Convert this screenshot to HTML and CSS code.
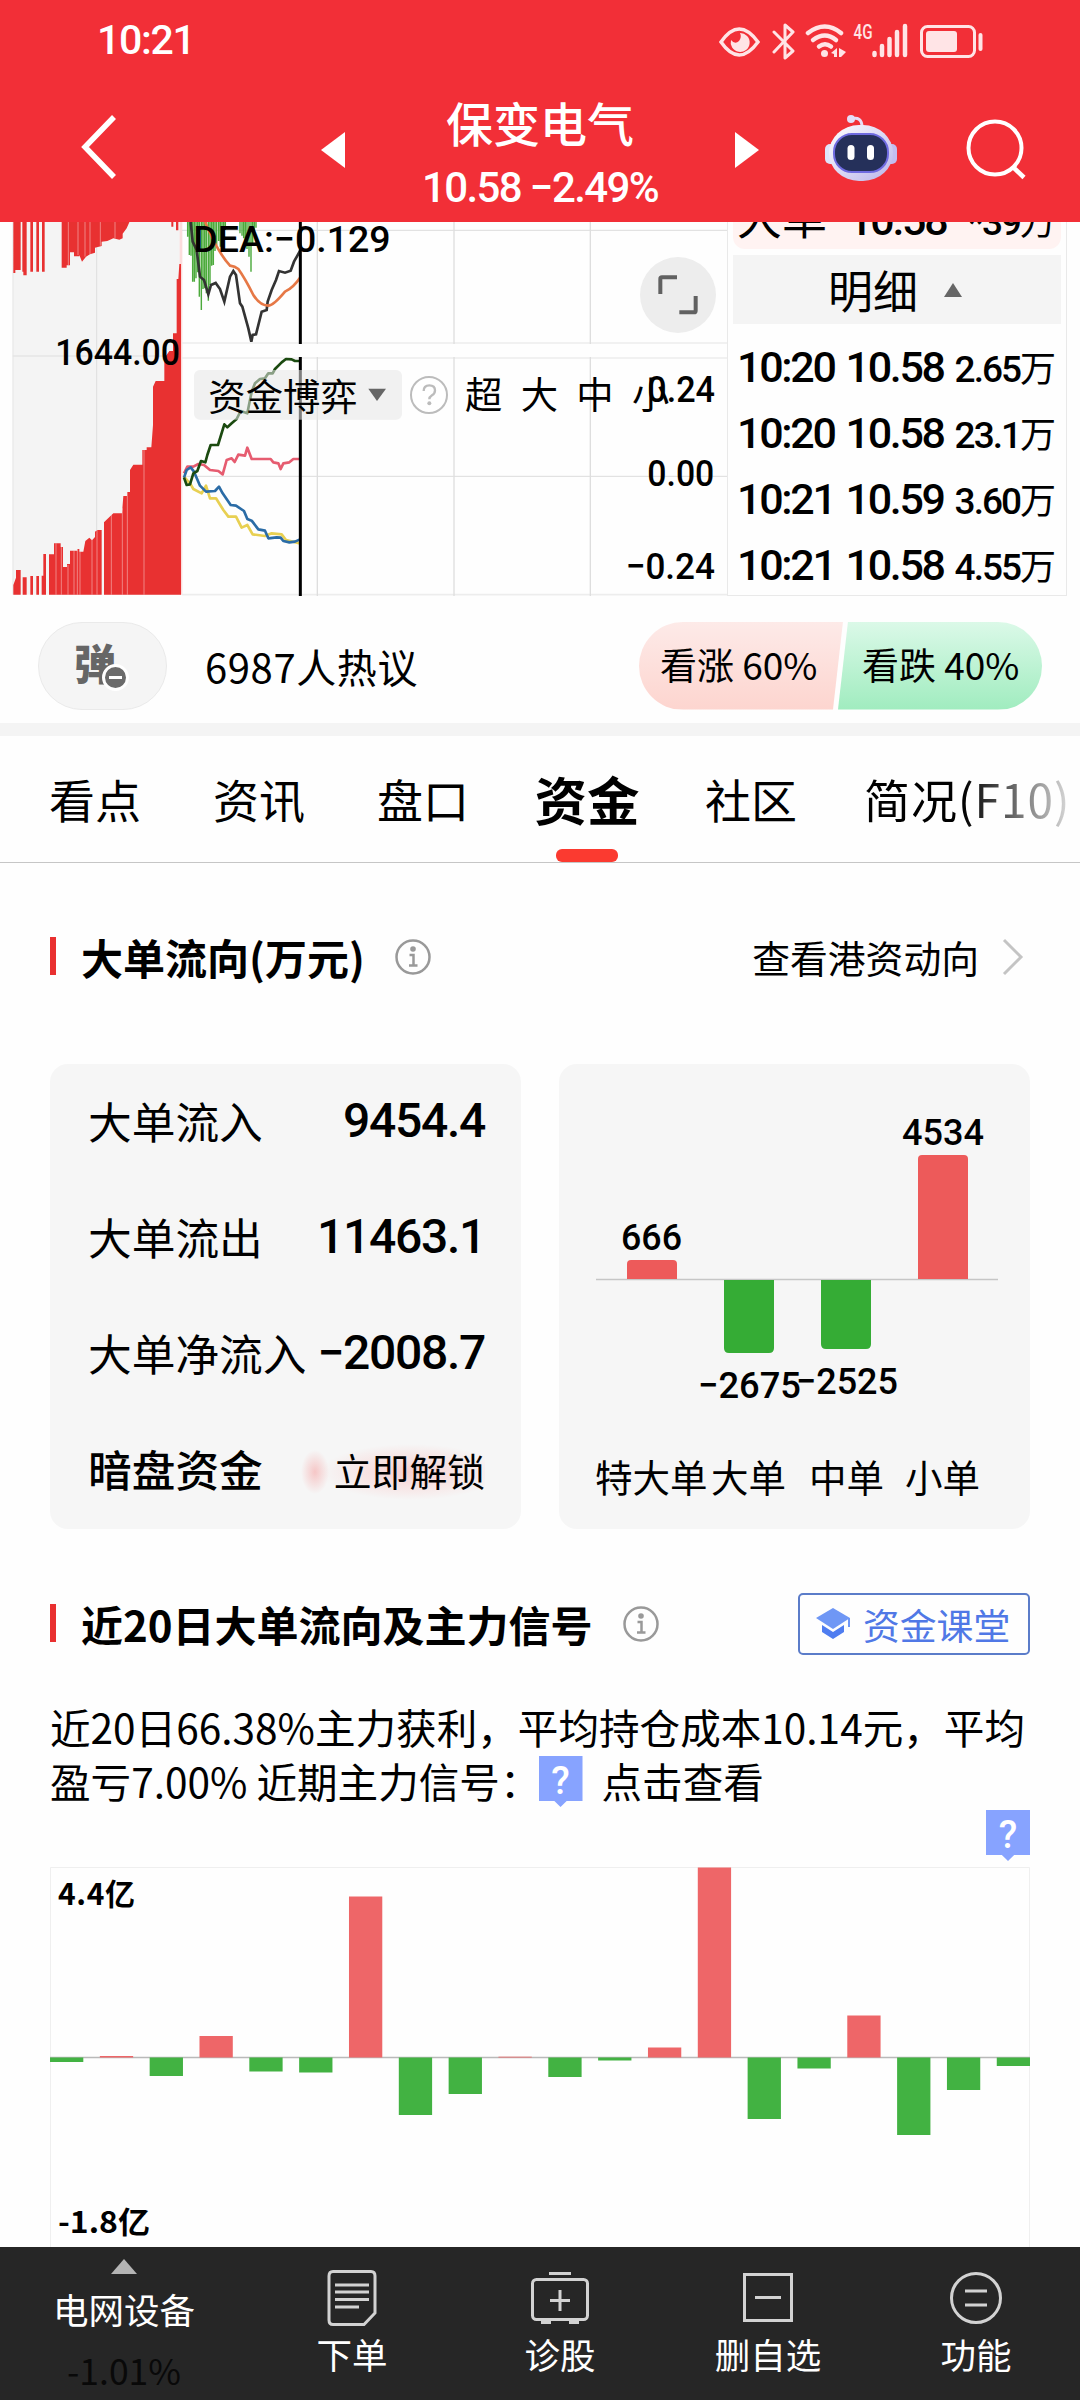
FILE: index.html
```html
<!DOCTYPE html>
<html lang="zh-CN">
<head>
    <meta charset="UTF-8">
    <meta name="viewport" content="width=device-width, initial-scale=1.0">
    <title>保变电气</title>
    <link rel="stylesheet" href="styles.css">
</head>
<body>
    <header>
        <div class="status-bar">
            <span class="clock num">10:21</span>
            <svg class="status-icons" width="270" height="40" viewBox="715 18 270 40">
                <path d="M721 40Q739 14 758 40Q739 66 721 40Z" fill="none" stroke="#ffe4e6" stroke-width="3.5"/>
                <path d="M740 31a9.500 9.500 0 1 1-9 7q4 5 8 1q3-4 1-8z" fill="#ffe4e6"/>
                <path d="M774 30L793 49L785 56V23L793 30L774 50" fill="none" stroke="#ffe4e6" stroke-width="3" stroke-linejoin="round" stroke-linecap="round"/>
                <g fill="none" stroke="#ffe4e6" stroke-width="4.500" stroke-linecap="round">
                    <path d="M808 31Q825 18 841 31"/>
                    <path d="M813 38Q825 29 836 38"/>
                    <path d="M819 44.500Q825 40 831 44.500"/>
                </g>
                <circle cx="824.500" cy="51.500" r="3.500" fill="#ffe4e6"/>
                <path d="M831 51l6-5v9h-3v-3zM839 46l7 4-5 5h-2z" fill="#ffe4e6"/>
                <text class="net" x="853.500" y="37" textLength="19" lengthAdjust="spacingAndGlyphs">4G</text>
                <path d="M874.500 51v2M882 44v9M889.500 37v16M897 30v23M905 24v29" stroke="#ffe4e6" stroke-width="4.500" stroke-linecap="round"/>
                <rect x="921.500" y="24.500" width="53" height="30" rx="6" fill="none" stroke="#ffe4e6" stroke-width="3"/>
                <rect x="926" y="29" width="31" height="21" rx="3" fill="#ffe4e6"/>
                <path d="M980.500 33v14" stroke="#ffe4e6" stroke-width="4" stroke-linecap="round"/>
            </svg>
        </div>
        <div class="title-bar">
            <svg class="back" width="40" height="70" viewBox="0 0 40 70"><path d="M35 5L6 35L35 65" fill="none" stroke="#fff" stroke-width="5.5"/></svg>
            <svg class="prev" width="24" height="36" viewBox="0 0 24 36"><path d="M24 0V36L0 18Z" fill="#fff"/></svg>
            <div class="stock">
                <h1>保变电气</h1>
                <p class="num">10.58 −2.49%</p>
            </div>
            <svg class="next" width="24" height="36" viewBox="0 0 24 36"><path d="M0 0V36L24 18Z" fill="#fff"/></svg>
            <svg class="robot" width="74" height="68" viewBox="0 0 74 68">
                <defs>
                    <linearGradient id="shell" x1="0" y1="0" x2="1" y2="1">
                        <stop offset="0" stop-color="#fff"/>
                        <stop offset="1" stop-color="#b9b4ea"/>
                    </linearGradient>
                </defs>
                <path d="M27 5Q38 2 38 13" fill="none" stroke="#e8dcf5" stroke-width="3"/>
                <circle cx="27" cy="5" r="4" fill="#e4def8"/>
                <rect x="1" y="30" width="12" height="20" rx="5" fill="#dfe4fa"/>
                <rect x="61" y="30" width="12" height="20" rx="5" fill="#c3bdf0"/>
                <rect x="5" y="11" width="64" height="56" rx="30" fill="url(#shell)"/>
                <rect x="10" y="20" width="54" height="38" rx="18" fill="#25305a" stroke="#6f6be0" stroke-width="2"/>
                <rect x="23.500" y="31" width="7" height="15" rx="3.500" fill="#fff"/>
                <rect x="43" y="31" width="7" height="15" rx="3.500" fill="#fff"/>
            </svg>
            <svg class="search" width="64" height="64" viewBox="0 0 64 64">
                <circle cx="31" cy="31" r="26.500" fill="none" stroke="#fff" stroke-width="4"/>
                <path d="M49 50L60 60.500" stroke="#fff" stroke-width="4.500"/>
            </svg>
        </div>
    </header>

    <main>
        <section class="quote">
            <!-- chart grid uses 3 units per pixel -->
            <svg class="charts" width="727" height="374" viewBox="0 21 2181 1122">
                <!-- depth -->
                <rect x="38" y="21" width="505" height="1118" fill="#f4f4f4"/>
                <path d="M290 21V1139M38 423H543" stroke="#dedede" stroke-width="3"/>
                <path d="M39 21V1139" stroke="#e6e6e6" stroke-width="3"/>
                <path d="M543 21V1139" stroke="#fbdcdc" stroke-width="8"/>
                <g fill="#e83131">
                    <path d="M40 21V174H46V165H62V21ZM67 21V170H70V181H80V21ZM91 21V170H99V21ZM109 21V170H117V21ZM126 21V170H134V21ZM185 21V158H200V151H210V112H222V124H238V120L246 140L258 125L270 118L285 113V98L305 93V80L322 78L340 70L358 74L368 70V56L380 40L388 22V21Z"/>
                    <path d="M514 21V35H520V21ZM528 21V46H535V21Z"/>
                    <path d="M40 1139V1110L48 1088V1065H62V1139ZM68 1139V1087H80V1139ZM91 1139V1083H99V1139ZM109 1139V1083H117V1139ZM125 1139V1082H130V1017H138V1139ZM147 1139V1018H162V985H182V996H189V1056H201V1047H210V1007H232V1002H238V1010H250L256 978L268 968L276 976L285 966V950L292 945H305V1139ZM312 1139V922L322 912L340 895H366L370 843H381V831H390V765L400 749H427V705H440V697H454L459 630V515L467 498H493V430L508 408H519V355H530V192H535L538 147H543V1139Z"/>
                </g>
                <path d="M204 1050V1139M222 1007V1139M232 1003V1139M276 975V1139M334 900V1139M367 880V1139M382 831V1139M432 705V1139M168 985V1139M184 996V1139M240 1010V1139M291 945V1139M345 21V70M270 21V118M301 21V92M205 21V150M234 21V120M255 21V125" stroke="#fff" stroke-opacity=".4" stroke-width="3"/>

                <!-- frames -->
                <path d="M546 46H2181M546 784H2181" stroke="#dcdcdc" stroke-width="3"/>
                <path d="M546 384H2181M546 429H2181M546 1139H2181" stroke="#ededed" stroke-width="5"/>
                <path d="M952 21V387M1362 21V387M1771 21V387M952 426V1143M1362 426V1143M1771 426V1143" stroke="#dedede" stroke-width="4"/>

                <!-- MACD -->
                <path d="M563 21V65M568 21V120M573 21V122M578 21V200M583 21V200M588 21V190M593 21V172M598 21V245M604 21V285M609 21V222M614 21V220M619 21V235M625 21V257M630 21V210M635 21V152M640 21V150M645 21V108M650 21V90M656 21V78M661 21V95M666 21V90M671 21V75M676 21V45M720 21V55M726 21V62M731 21V70M736 21V92M741 21V102M747 21V125M753 21V170M758 21V85M763 21V60M768 21V38" stroke="#4caa3c" stroke-width="4.300"/>
                <path d="M572 21L578 80L590 105L600 185L612 195L625 238L633 210L647 204L660 222L673 260L690 185L700 168L708 180L720 265L727 275L745 340L754 380L758 360L768 358L785 290L800 285L803 260L815 225L828 195L837 168L855 173L872 167L882 140L900 108" fill="none" stroke="#333" stroke-width="8"/>
                <path d="M615 21L640 75Q665 125 690 152Q705 154 715 162Q735 190 760 240Q780 272 805 272Q820 272 855 230Q880 218 900 188" fill="none" stroke="#e67846" stroke-width="8"/>

                <!-- fund flow lines -->
                <g fill="none" stroke-width="8" stroke-linejoin="round">
                    <path d="M552 775L562 755H580L595 747L612 750L630 765L655 768L668 778L680 735L695 730L704 741L715 719L735 722L742 698L755 732H812L820 742L835 745L842 762L850 745L868 742L880 732H900" stroke="#e65c70"/>
                    <path d="M552 785L572 808L580 822L605 835L618 812L630 850H648L670 885L685 905H708L725 938L742 930L758 958L795 963L815 955L845 958L858 975L900 985" stroke="#e8d052"/>
                    <path d="M552 788L560 765L572 757L582 770L600 812L618 830L645 828L657 815L668 835L692 870L708 872L732 888L742 912L755 917L775 943L795 947L805 970L830 967L842 968L850 978L868 982L885 980L900 973" stroke="#2b6ca6"/>
                    <path d="M552 788L560 810L570 808L580 775L592 768L603 738L616 742L622 720L632 690L654 690L673 628L682 637L695 625L710 612L722 588L742 595L755 530L765 505L780 492L795 490L805 475H818L825 462L845 442L858 432L875 433L885 438H900" stroke="#1b4a10"/>
                </g>
                <path d="M901 21V387M901 426V1143" stroke="#000" stroke-width="9"/>

                <rect x="582" y="465" width="624" height="149" rx="18" fill="#e6e6e6" fill-opacity=".55"/>
                <path d="M1105 521H1158L1131 558Z" fill="#666"/>
                <circle cx="1287" cy="540" r="54" fill="#fff" stroke="#bcbcbc" stroke-width="6"/>
                <path d="M1271 528Q1271 511 1288 511Q1305 511 1305 526Q1305 536 1296 541Q1288 546 1288 553" fill="none" stroke="#bcbcbc" stroke-width="7"/>
                <circle cx="1288" cy="565" r="6" fill="#bcbcbc"/>

                <text class="chart-num" x="580" y="111" textLength="592" lengthAdjust="spacingAndGlyphs">DEA:−0.129</text>
                <text class="chart-num" x="166" y="450" textLength="374" lengthAdjust="spacingAndGlyphs">1644.00</text>
                <text class="chart-cjk" x="625" y="588">资金博弈</text>
                <text class="chart-cjk" x="1395" y="582">超</text>
                <text class="chart-cjk" x="1562" y="582">大</text>
                <text class="chart-cjk" x="1729" y="582">中</text>
                <text class="chart-cjk" x="1896" y="582">小</text>
                <text class="chart-num" x="1942" y="560" textLength="203" lengthAdjust="spacingAndGlyphs">0.24</text>
                <text class="chart-num" x="1942" y="813" textLength="201" lengthAdjust="spacingAndGlyphs">0.00</text>
                <text class="chart-num" x="1877" y="1091" textLength="268" lengthAdjust="spacingAndGlyphs">−0.24</text>

                <circle cx="2034" cy="240" r="114" fill="#ededed"/>
                <path d="M1981 237V192Q1981 187 1986 187H2031M2087 243V287Q2087 292 2082 292H2038" fill="none" stroke="#616161" stroke-width="12"/>
            </svg>
            <div class="ticks">
                <div class="tick big"><span>大单</span><b class="num">10.58</b><span class="vol"><i class="num">*39</i>万</span></div>
                <div class="ticks-head">明细<svg width="18" height="14" viewBox="0 0 18 14"><path d="M9 0L18 14H0Z" fill="#666"/></svg></div>
                <div class="tick"><b class="num">10:20</b><b class="num">10.58</b><span class="vol"><i class="num">2.65</i>万</span></div>
                <div class="tick"><b class="num">10:20</b><b class="num">10.58</b><span class="vol"><i class="num">23.1</i>万</span></div>
                <div class="tick"><b class="num">10:21</b><b class="num">10.59</b><span class="vol"><i class="num">3.60</i>万</span></div>
                <div class="tick"><b class="num">10:21</b><b class="num">10.58</b><span class="vol"><i class="num">4.55</i>万</span></div>
            </div>
        </section>

        <section class="discuss">
            <button class="danmu">弹<span class="danmu-off"></span></button>
            <p>6987人热议</p>
            <div class="vote">
                <span class="up">看涨 60%</span>
                <span class="down">看跌 40%</span>
            </div>
        </section>

        <nav class="tabs">
            <a>看点</a>
            <a>资讯</a>
            <a>盘口</a>
            <a class="active">资金</a>
            <a>社区</a>
            <a class="last">简况(F10)</a>
        </nav>

        <section class="flow">
            <div class="section-title">
                <h2>大单流向(万元)</h2>
                <svg class="info" width="38" height="38" viewBox="0 0 38 38"><circle cx="19" cy="19" r="16.500"/><circle class="dot" cx="19" cy="11" r="2.800"/><path d="M15.500 17H19.500V27M15 27.500H23.500"/></svg>
                <a class="more">查看港资动向<svg width="22" height="38" viewBox="0 0 22 38"><path d="M2 2L19 19L2 36" fill="none" stroke="#c4c4c4" stroke-width="3"/></svg></a>
            </div>
            <div class="cards">
                <div class="card">
                    <dl>
                        <dt>大单流入</dt><dd class="num">9454.4</dd>
                        <dt>大单流出</dt><dd class="num">11463.1</dd>
                        <dt>大单净流入</dt><dd class="num">−2008.7</dd>
                        <dt class="dark">暗盘资金</dt><dd class="unlock">立即解锁</dd>
                    </dl>
                </div>
                <div class="card">
                    <svg width="471" height="464" viewBox="559 1064 471 464">
                        <path d="M596 1279.500H998" stroke="#c6c6c6" stroke-width="1.500"/>
                        <g fill="#ed5a5a">
                            <path d="M627 1279V1264Q627 1260 631 1260H673Q677 1260 677 1264V1279Z"/>
                            <path d="M918 1279V1159Q918 1155 922 1155H964Q968 1155 968 1159V1279Z"/>
                        </g>
                        <g fill="#35ac35">
                            <path d="M724 1280V1348Q724 1353 729 1353H769Q774 1353 774 1348V1280Z"/>
                            <path d="M821 1280V1344Q821 1349 826 1349H866Q871 1349 871 1344V1280Z"/>
                        </g>
                        <g class="bar-num">
                            <text x="621" y="1250" textLength="61" lengthAdjust="spacingAndGlyphs">666</text>
                            <text x="902" y="1145" textLength="82" lengthAdjust="spacingAndGlyphs">4534</text>
                            <text x="698" y="1398" textLength="103" lengthAdjust="spacingAndGlyphs">−2675</text>
                            <text x="796" y="1394" textLength="102" lengthAdjust="spacingAndGlyphs">−2525</text>
                        </g>
                        <g class="bar-name">
                            <text x="595" y="1492">特大单</text>
                            <text x="711" y="1492">大单</text>
                            <text x="809" y="1492">中单</text>
                            <text x="905" y="1492">小单</text>
                        </g>
                    </svg>
                </div>
            </div>
        </section>

        <section class="signal">
            <div class="section-title">
                <h2>近20日大单流向及主力信号</h2>
                <svg class="info" width="38" height="38" viewBox="0 0 38 38"><circle cx="19" cy="19" r="16.500"/><circle class="dot" cx="19" cy="11" r="2.800"/><path d="M15.500 17H19.500V27M15 27.500H23.500"/></svg>
                <a class="course">
                    <svg width="36" height="34" viewBox="0 0 36 34">
                        <path d="M18 1L35 11L18 22L1 11Z" fill="#6f97f5"/>
                        <path d="M7 18L18 25L29 18V25L18 32L7 25Z" fill="#4f7df0"/>
                        <path d="M34 11V20" stroke="#6f97f5" stroke-width="2"/>
                    </svg>
                    资金课堂
                </a>
            </div>
            <p class="summary">近20日66.38%主力获利，平均持仓成本10.14元，平均<br>盈亏7.00% 近期主力信号：<span class="ask">?</span>点击查看</p>
            <div class="marker"><span class="ask">?</span></div>
            <svg class="days" width="980" height="380" viewBox="50 1867 980 380">
                <path d="M50.500 2247V1867.500H1029.500V2247" fill="none" stroke="#efefef"/>
                <path d="M50 2057.500H1030" stroke="#b9b9b9" stroke-width="1.500"/>
                <g id="bars"></g>
                <text x="58" y="1905" textLength="77">4.4亿</text>
                <text x="58" y="2233" textLength="92" lengthAdjust="spacingAndGlyphs">-1.8亿</text>
            </svg>
        </section>
    </main>

    <footer>
        <div class="board">
            <svg width="26" height="15" viewBox="0 0 26 15"><path d="M13 0L26 15H0Z" fill="#b4b4b4"/></svg>
            <span>电网设备</span>
            <span class="change">-1.01%</span>
        </div>
        <div class="action">
            <svg width="50" height="58" viewBox="0 0 50 58"><path d="M6 2.500H44Q48 2.500 48 7V44L37 55.500H6Q2 55.500 2 51V7Q2 2.500 6 2.500Z"/><path d="M8 16H42M8 23H42M8 30.500H42M8 38H32"/></svg>
            <span>下单</span>
        </div>
        <div class="action">
            <svg width="60" height="58" viewBox="0 0 60 58"><rect x="2.500" y="10.500" width="55" height="40" rx="4"/><path d="M19 4.500H41M30 21V42M20 31.500H40M11 53.500H21M39 53.500H49"/></svg>
            <span>诊股</span>
        </div>
        <div class="action">
            <svg width="50" height="58" viewBox="0 0 50 58"><rect x="1.500" y="5.500" width="47" height="46"/><path d="M12 28.500H38"/></svg>
            <span>删自选</span>
        </div>
        <div class="action">
            <svg width="54" height="58" viewBox="0 0 54 58"><circle cx="27" cy="29" r="24.500"/><path d="M16 22H38M16 36H38"/></svg>
            <span>功能</span>
        </div>
    </footer>

    <script>
        // 近20日大单净额柱状图
        const days = [-4.5, 1.5, -18.5, 21.5, -14, -15, 161, -57.5, -36.5, 0.8,
            -19.5, -3, 10, 190, -61.5, -11, 42, -77.5, -32.5, -8.5];
        const zero = 2057.5;
        let bars = '';

        days.forEach((v, i) => {
            const x = 50 + i * 49.83;
            const y = v > 0 ? zero - v : zero;
            const color = v > 0 ? '#ee6668' : '#42b242';
            bars += `<rect x="${x}" y="${y}" width="33.3" height="${Math.abs(v)}" fill="${color}"/>`;
        });

        document.getElementById('bars').innerHTML = bars;
    </script>
</body>
</html>
```
FILE: styles.css
```css
* {
    box-sizing: border-box;
}

body {
    margin: 0;
    width: 1080px;
    height: 2400px;
    overflow: hidden;
    display: flex;
    flex-direction: column;
    font-family: "Noto Sans CJK SC", sans-serif;
    background: #fefefe;
    color: #000;
}

h1, h2, p, dl, dd {
    margin: 0;
}

svg {
    display: block;
    flex: none;
}

.num {
    font-family: Roboto, "Noto Sans CJK SC", sans-serif;
    font-weight: 500;
    font-style: normal;
    letter-spacing: -1.5px;
}

/* header */
header {
    height: 222px;
    flex: none;
    background: #f22f37;
    color: #fff;
}

.status-bar {
    height: 80px;
    padding: 0 95px 0 97px;
    display: flex;
    justify-content: space-between;
    align-items: center;
}

.clock {
    font-size: 41px;
    line-height: 82px;
    letter-spacing: -1.3px;
}

.net {
    font: 500 21px Roboto, sans-serif;
    fill: #ffe4e6;
}

.title-bar {
    height: 142px;
    display: flex;
    align-items: flex-start;
}

.back {
    margin: 32px 0 0 79px;
}

.prev {
    margin: 52px 0 0 202px;
}

.stock {
    width: 390px;
    margin-top: 15px;
    text-align: center;
}

.stock h1 {
    font-size: 47px;
    font-weight: 500;
    line-height: 54px;
}

.stock p {
    font-size: 42px;
    line-height: 78px;
    letter-spacing: -1.6px;
}

.next {
    margin: 52px 0 0 0;
}

.robot {
    margin: 34px 0 0 65px;
}

.search {
    margin: 37px 0 0 66px;
}

/* quote */
.quote {
    height: 374px;
    display: flex;
    flex: none;
}

.ticks {
    width: 340px;
    height: 374px;
    padding: 0 5px;
    border: solid #e9e9e9;
    border-width: 0 1px 1px;
    overflow: hidden;
}

.ticks-head {
    height: 69px;
    margin: 6px 0 9px;
    padding-left: 95px;
    background: #f4f4f4;
    display: flex;
    align-items: center;
    gap: 26px;
    font-size: 45px;
    line-height: 69px;
}

.tick {
    height: 66px;
    padding: 0 5px 0 4px;
    display: flex;
    justify-content: space-between;
    align-items: baseline;
    line-height: 66px;
}

.tick b {
    font-size: 43px;
    letter-spacing: -2.3px;
}

.vol {
    font-size: 36px;
}

.vol .num {
    font-size: 37px;
    letter-spacing: -2px;
}

/* half hidden under the header */
.tick.big {
    margin-top: -39px;
    background: #fff3f2;
    border-radius: 0 0 12px 12px;
    font-size: 45px;
}

.chart-num {
    font: 500 113px Roboto, sans-serif;
}

.chart-cjk {
    font-size: 112px;
}

/* discuss */
.discuss {
    height: 127px;
    padding: 12px 38px 0;
    display: flex;
    align-items: center;
}

.danmu {
    position: relative;
    width: 129px;
    height: 88px;
    padding: 0 15px 8px 0;
    border: 1px solid #eaeaea;
    border-radius: 44px;
    background: #f5f5f5;
    color: #666;
    font: 900 42px "Noto Sans CJK SC", sans-serif;
}

.danmu-off {
    position: absolute;
    left: 63px;
    top: 41px;
    width: 27px;
    height: 27px;
    border: 3px solid #fff;
    border-radius: 50%;
    background: linear-gradient(#fff, #fff) center / 13px 3px no-repeat, #6b6b6b;
}

.discuss p {
    margin-left: 38px;
    font-size: 40px;
    letter-spacing: .6px;
}

.vote {
    width: 403px;
    height: 88px;
    margin-left: auto;
    border-radius: 44px;
    overflow: hidden;
    display: flex;
    font-size: 37px;
    line-height: 85px;
}

.vote span {
    width: 204px;
    height: 88px;
    flex: none;
}

.up {
    padding-left: 21px;
    background: linear-gradient(#fdeae8, #fdd5cf);
    clip-path: polygon(0 0, 100% 0, 194px 100%, 0 100%);
}

.down {
    margin-left: -5px;
    padding-left: 24px;
    background: linear-gradient(#dbf9e8, #a0ecbf);
    clip-path: polygon(10px 0, 100% 0, 100% 100%, 0 100%);
}

/* tabs */
.tabs {
    height: 140px;
    padding-left: 13px;
    display: flex;
    border-top: 13px solid #f4f4f4;
    border-bottom: 1px solid #c6c6c6;
    font-size: 46px;
    line-height: 125px;
}

.tabs a {
    width: 164px;
    flex: none;
    text-align: center;
}

.tabs .active {
    position: relative;
    font-size: 52.5px;
    font-weight: 700;
}

.tabs .active::after {
    content: "";
    position: absolute;
    left: 51px;
    bottom: 0;
    width: 62px;
    height: 13px;
    border-radius: 6px;
    background: #fb3a30;
}

.tabs .last {
    width: 240px;
    padding-left: 31px;
    text-align: left;
    letter-spacing: 1px;
    color: transparent;
    background: linear-gradient(90deg, #000 130px, #ddd 238px);
    background-clip: text;
    -webkit-background-clip: text;
}

/* sections */
.flow, .signal {
    padding: 0 50px;
}

.section-title {
    display: flex;
    align-items: center;
    height: 64px;
}

.section-title h2 {
    padding-left: 31px;
    font-size: 42px;
    font-weight: 700;
    line-height: 62px;
    background: linear-gradient(#e93030, #e93030) 0 11px / 6px 38px no-repeat;
}

.info {
    margin-left: 29px;
    fill: none;
    stroke: #999;
    stroke-width: 2.5;
}

.info .dot {
    fill: #999;
    stroke: none;
}

.flow .section-title {
    margin-top: 62px;
}

.more {
    display: flex;
    align-items: center;
    gap: 23px;
    margin: 0 6px 0 auto;
    font-size: 37.8px;
    line-height: 60px;
}

.cards {
    margin-top: 75px;
    display: flex;
    justify-content: space-between;
}

.card {
    width: 471px;
    height: 465px;
    border-radius: 18px;
    background: #f6f6f6;
}

.card dl {
    display: grid;
    grid-template-columns: auto 1fr;
    grid-auto-rows: 116px;
    padding: 0 36px 0 38px;
    line-height: 113px;
    font-size: 43.7px;
    white-space: nowrap;
}

.card dd {
    text-align: right;
    font-size: 48px;
    letter-spacing: -1.3px;
}

.card .dark {
    font-weight: 500;
}

.card .unlock {
    margin-left: -5px;
    font-size: 37.8px;
    line-height: 116px;
    letter-spacing: 0;
    background: radial-gradient(ellipse 14px 22px at 14px 60px, rgba(245, 140, 140, .45), transparent),
        radial-gradient(ellipse 90px 28px at 110px 60px, rgba(250, 150, 150, .4), transparent);
}

.bar-num {
    font: 500 37px Roboto, sans-serif;
}

.bar-name {
    font-size: 37.5px;
}

.signal .section-title {
    margin-top: 63px;
}

.course {
    display: flex;
    align-items: center;
    gap: 12px;
    width: 232px;
    height: 62px;
    margin-left: auto;
    padding-left: 15px;
    border: 2px solid #5b7cc9;
    border-radius: 5px;
    color: #5078e6;
    font-size: 36.8px;
    line-height: 55px;
    white-space: nowrap;
}

.summary {
    margin-top: 44px;
    font-size: 40.6px;
    line-height: 54px;
    white-space: nowrap;
}

.ask {
    display: inline-block;
    width: 44px;
    height: 51px;
    background: #87a3ff;
    clip-path: polygon(0 0, 100% 0, 100% 88%, 64% 88%, 50% 100%, 36% 88%, 0 88%);
    color: #fff;
    font: 500 38px/50px Roboto, sans-serif;
    text-align: center;
    vertical-align: top;
}

.summary .ask {
    margin: 2px 19px 0 -2px;
}

.marker {
    height: 57px;
    margin-top: 2px;
    text-align: right;
}

.days text {
    font-size: 30px;
    font-weight: 700;
}

/* bottom bar */
footer {
    position: fixed;
    left: 0;
    top: 2247px;
    width: 1080px;
    height: 153px;
    display: flex;
    background: #262626;
    color: #fff;
    font-size: 35.5px;
    line-height: 52px;
}

.board {
    width: 248px;
    padding-top: 12px;
    display: flex;
    flex-direction: column;
    align-items: center;
}

.board span {
    margin-top: 9px;
}

.board .change {
    color: #090909;
}

.action {
    width: 208px;
    padding-top: 22px;
    display: flex;
    flex-direction: column;
    align-items: center;
}

.action span {
    margin-top: 1px;
}

.action svg {
    fill: none;
    stroke: #d2d2d2;
    stroke-width: 3;
}
```
